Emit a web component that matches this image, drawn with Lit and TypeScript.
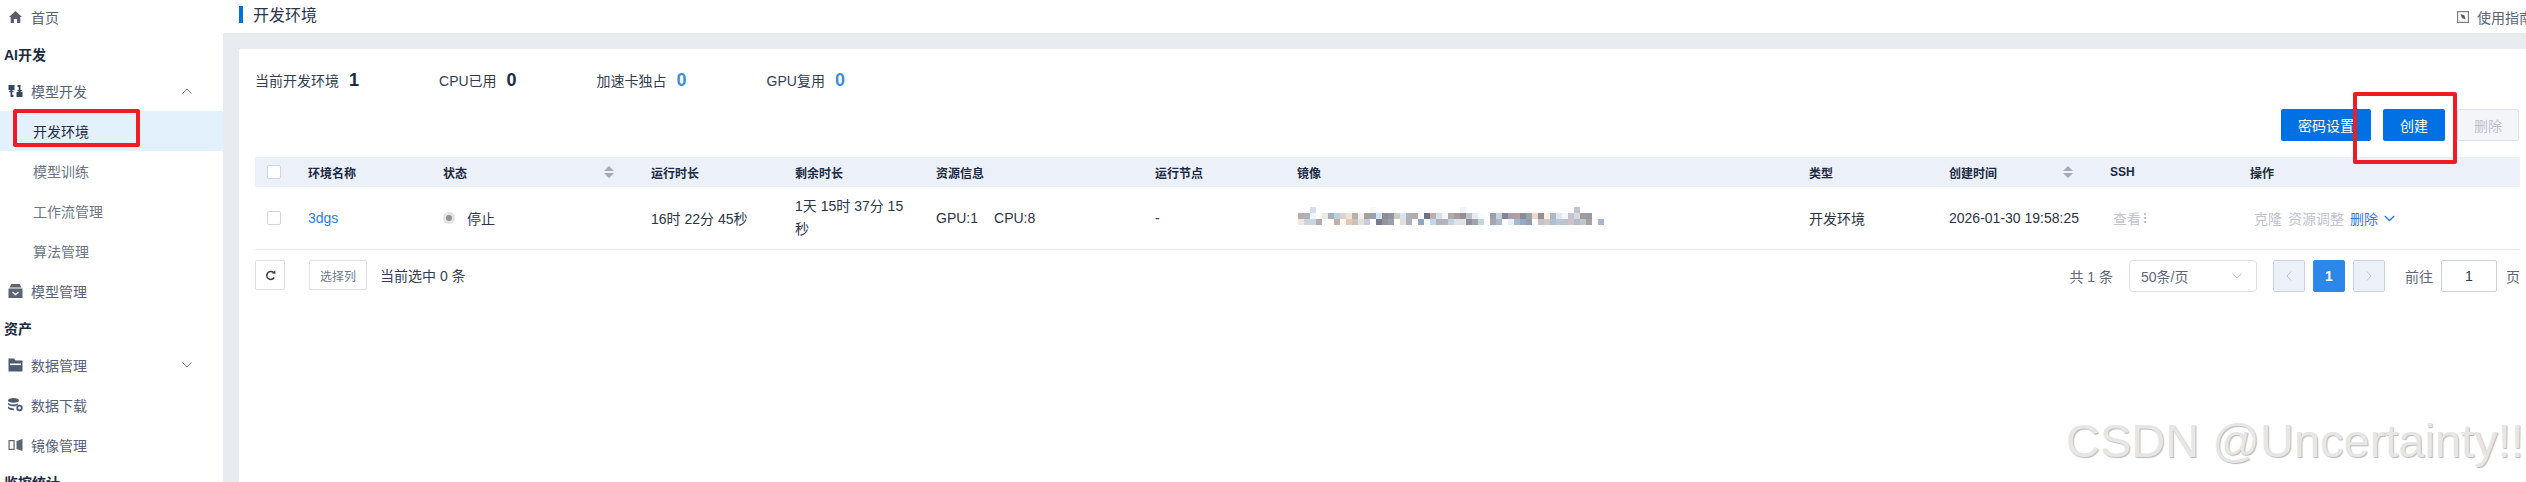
import { LitElement, html, css, svg } from "lit";
import { customElement } from "lit/decorators.js";

const R0: Record<number, string> = { 2: "#d6dfe9", 12: "#fbf8f3", 27: "#eef4fa", 46: "#c3c2c8" };
const R1 = ["#bdaba8","#a9b2bf","#ecf6fc","#fff","#ece8e4","#abafb9","#bcd0e4","#d9d4d1","#f3e4d3","#b8b2ae","#f2f0ef","#a89f9f","#96a2b0","#cfe4f1","#8f8e97","#8e96a1","#cfc9c2","#d0e6f7","#b2b0b6","#b5aab0","#fff","#6f7088","#c5aeaa","#d3dfea","#f5f5f5","#b5a8a8","#a79c9d","#968f95","#bdc2ca","#e4ebf2","#fafbfc","#fff","#96a0b3","#c6d3e0","#838499","#a5a0a9","#b3a09e","#8b8d95","#9aa5a9","#f0d9c4","#8f9098","#fdf0df","#aab8c6","#dce7ef","#f3f7fb","#c2c3cd","#d2dbe4","#a39a9d","#9a99a6","#fff","#fff"];
const R2 = ["#f3e6e1","#ced3da","#c7d6e3","#b2acaf","#fff","#fff","#bfb0ae","#fbf7f0","#e3c9b5","#cdc2ba","#e5e2dc","#c5cedc","#fff","#7b7b8e","#989398","#98a0ac","#fff","#e6ddd3","#aeb1bc","#fff","#8ea6c3","#fbfaf5","#bcdaf3","#b6b0b8","#b3b5bd","#c3d3e6","#dfe3e8","#e3e3e3","#8f909e","#a0a4ae","#c8d5de","#fff","#a7a6b0","#adbac6","#fff","#e8f0f7","#a8b8d0","#97a9c6","#95a0ae","#fff","#c9c2c6","#d2c9c8","#b2c0ce","#b7c8d8","#bfc2cc","#cfc3c5","#b7bbc6","#bdc7cc","#ab9f9f","#fff","#abb8cc"];

const icon = (w: number, h: number, vb: string, body: unknown) =>
  html`<svg class="ic" width=${w} height=${h} viewBox=${vb}>${body}</svg>`;

const icons: Record<string, unknown> = {
  home: icon(14, 14, "0 0 14 14", svg`<path fill="#585f6b" d="M7 1 L13.5 7 L11.8 7 L11.8 13 L8.6 13 L8.6 9 L5.4 9 L5.4 13 L2.2 13 L2.2 7 L.5 7 Z"/>`),
  dev: icon(14, 14, "0 0 14 14", svg`<g fill="#36465c"><rect x="0" y="1" width="6" height="5"/><rect x="8" y="8" width="6" height="5"/><path d="M9 1h3v5h2l-3 2.4L8.500 6h1.700V3H9z"/><path d="M5 13H2V8H0l3-2.400L5.500 8H3.800v3H5z"/></g>`),
  box: icon(14, 14, "0 0 14 14", svg`<path fill="#5a6472" d="M3 0h8l2 3.500H1zM0 4.500h14V14H0z"/><path fill="none" stroke="#fff" stroke-width="1.400" d="M4 8l3 2.500L10 8"/>`),
  folder: icon(14, 14, "0 0 14 14", svg`<path fill="#4c5b71" d="M0 .5h5.500L7 2.500h7V13.500H0z"/><rect x="1.500" y="5.500" width="11" height="1.600" fill="#fff"/>`),
  db: icon(15, 14, "0 0 15 14", svg`<g fill="#4c5b71"><ellipse cx="5.500" cy="2.400" rx="5.500" ry="2.400"/><path d="M0 4.400c1 1.500 3.500 2 5.500 2 1.500 0 3-.3 4.300-1v1.600C8.500 8 7 8.300 5.500 8.300 3.500 8.300 1 7.700 0 6.300zM0 8.300c1 1.500 3.500 2 5.500 2l.6 1.900c-2.600.2-5.200-.4-6.100-1.900z"/></g><circle cx="11.500" cy="10" r="2.300" fill="none" stroke="#4c5b71" stroke-width="1.800"/>`),
  mirror: icon(14, 12, "0 0 14 12", svg`<rect x=".6" y="1.600" width="5" height="8.800" fill="none" stroke="#5a6472" stroke-width="1.200"/><path fill="#5a6472" d="M8 2l6-2v12l-6-2z"/>`),
};

const chevron = (up: boolean) => html`<svg class="chev" width="10" height="6" viewBox="0 0 10 6"><path fill="none" stroke="#6b7585" stroke-width="1" d=${up ? "M.5 5.500L5 1l4.500 4.500" : "M.5.500L5 5l4.500-4.500"}/></svg>`;

const sortIcon = html`<svg class="sort" width="10" height="12" viewBox="0 0 10 12"><path fill="#a6aab4" d="M5 0l5 5H0zM0 7h10l-5 5z"/></svg>`;

@customElement("app-root")
export class AppRoot extends LitElement {
  static styles = css`
    :host { display: block; position: relative; width: 2526px; height: 482px; overflow: hidden; background: #e8ebf0;
      font-family: "Liberation Sans", "Noto Sans CJK SC", sans-serif; font-size: 14px; color: #2b3448; }
    * { box-sizing: border-box; }
    .page { display: flex; height: 482px; }
    .side { width: 223px; flex: none; background: #fff; height: 482px; overflow: hidden; }
    .nav { margin-top: -3px; display: flex; flex-direction: column; }
    .item { height: 40px; flex: none; display: flex; align-items: center; padding: 0 31px 0 8px; color: #55617a; }
    .item .ic { width: 15px; flex: none; margin-right: 8px; }
    .item .chev { margin-left: auto; margin-right: 0; }
    .sub { padding-left: 33px; color: #6b7586; }
    .sub.active { background: #e3f1fc; color: #1f2c44; }
    .title { height: 34px; flex: none; display: flex; align-items: center; padding-left: 4px; font-weight: 700; color: #1c2a44; }
    .main { flex: 1; min-width: 0; display: flex; flex-direction: column; }
    .top { height: 33px; flex: none; background: #fff; display: flex; align-items: center; padding: 0 0 0 16px; margin-bottom: 16px; position: relative; }
    .top .bar { width: 4px; height: 17px; background: #0071e3; margin-right: 10px; margin-top: -4px; }
    .top .name { font-size: 16px; color: #2b3448; margin-top: -6px; }
    .guide { margin-left: auto; display: flex; align-items: center; color: #5a6577; white-space: nowrap; width: 69px; overflow: hidden; flex: none; }
    .guide svg { flex: none; margin-right: 8px; }
    .card { flex: 1; background: #fff; margin-left: 16px; padding: 16px 6px 0 16px; min-height: 0; }
    .stats { display: flex; gap: 80px; height: 30px; align-items: center; color: #333d4f; }
    .stat { display: flex; align-items: center; gap: 10px; }
    .stat b { font-size: 18px; color: #1c2a44; }
    .stat b.blue { color: #3a8ee6; }
    .actions { display: flex; justify-content: flex-end; gap: 12px; margin-top: 14px; margin-right: 1px; height: 32px; }
    .btn { height: 32px; padding: 0 17px; display: flex; align-items: center; background: #0071e3; color: #fff; border-radius: 2px; }
    .btn.off { background: #f4f5f9; color: #bfc3cf; border: 1px solid #dfe2ea; padding: 0 16px; }
    .table { margin-top: 16px; }
    .row { display: grid; grid-template-columns: 53px 135px 208px 144px 141px 219px 142px 512px 140px 161px 140px 270px; }
    .head { height: 30px; background: #ebf0f9; font-size: 12px; font-weight: 700; color: #1c2a44; }
    .head > div { display: flex; align-items: center; }
    .body { height: 63px; border-bottom: 1px solid #e8ebf0; }
    .body > div { display: flex; align-items: center; }
    .pr { padding-right: 37px; }
    .sort { margin-left: auto; }
    .cb { width: 14px; height: 14px; border: 1px solid #cfd3e3; border-radius: 2px; background: #fff; margin-left: 12px; }
    .link { color: #2a7de1; }
    .dot { width: 12px; height: 12px; border-radius: 50%; background: #e3e3e3; margin-right: 12px; display: flex; align-items: center; justify-content: center; }
    .dot i { width: 6px; height: 6px; border-radius: 50%; background: #8f8f98; }
    .wrap { line-height: 23px; padding-right: 24px; }
    .res { gap: 16px; }
    .mosaic { display: grid; grid-template-columns: repeat(51, 6px); grid-auto-rows: 6px; margin-bottom: 4px; margin-left: 1px; }
    .ops { padding-left: 4px; gap: 6px; color: #bfc4d0; }
    .ops .del { color: #2a7de1; }
    .ops svg { margin-left: 0; }
    .ssh { padding-left: 3px; color: #bfc4d0; }
    .ssh svg { margin-left: 3px; }
    .foot { display: flex; align-items: flex-start; margin-top: 10px; }
    .refresh { width: 30px; height: 30px; border: 1px solid #dcdfe6; border-radius: 2px; display: flex; align-items: center; justify-content: center; margin-right: 24px; }
    .pick { width: 58px; height: 30px; border: 1px solid #dcdfe6; border-radius: 2px; display: flex; align-items: center; justify-content: center; font-size: 12px; color: #6f7a8c; margin-right: 13px; }
    .sel { height: 30px; display: flex; align-items: center; color: #333d4f; }
    .pager { margin-left: auto; display: flex; align-items: center; height: 32px; color: #5d6779; }
    .size { width: 128px; height: 32px; border: 1px solid #dcdfe6; border-radius: 4px; margin: 0 16px; padding: 0 14px 0 11px; display: flex; align-items: center; justify-content: space-between; }
    .pg { width: 32px; height: 32px; display: flex; align-items: center; justify-content: center; background: #ecf0f9; border: 1px solid #ccd0de; border-radius: 2px; margin-right: 8px; }
    .pg.on { background: #2b87e8; border-color: #2b87e8; color: #fff; font-weight: 700; }
    .goto { margin-left: 12px; margin-right: 8px; }
    .inp { width: 56px; height: 32px; border: 1px solid #ccd0e0; border-radius: 2px; display: flex; align-items: center; justify-content: center; color: #2d3a55; margin-right: 9px; }
    .red { position: absolute; border: 4px solid #ee1c25; border-radius: 2px; }
    .r1 { left: 13px; top: 109px; width: 127px; height: 38px; }
    .r2 { left: 2353px; top: 92px; width: 104px; height: 72px; }
    .mark { position: absolute; left: 2066px; top: 417px; font-size: 47px; line-height: 47px; color: #e6e6e6; text-shadow: 1px 1px 1px #b8b8b8; white-space: nowrap; }
  `;

  private mosaic() {
    const cells = [];
    for (let c = 0; c < 51; c++) cells.push(R0[c] ?? "#fff");
    for (let c = 0; c < 51; c++) cells.push(R1[c] ?? "#fff");
    for (let c = 0; c < 51; c++) cells.push(R2[c] ?? "#fff");
    return html`<div class="mosaic">${cells.map((col) => html`<span style="background:${col}"></span>`)}</div>`;
  }

  render() {
    const small = (d: string) => html`<svg width="6" height="10" viewBox="0 0 6 10"><path fill="none" stroke="#bcc3d0" d=${d}/></svg>`;
    return html`
      <div class="page">
        <aside class="side"><nav class="nav">
          <div class="item">${icons.home}首页</div>
          <div class="title">AI开发</div>
          <div class="item">${icons.dev}模型开发${chevron(true)}</div>
          <div class="item sub active">开发环境</div>
          <div class="item sub">模型训练</div>
          <div class="item sub">工作流管理</div>
          <div class="item sub">算法管理</div>
          <div class="item">${icons.box}模型管理</div>
          <div class="title">资产</div>
          <div class="item">${icons.folder}数据管理${chevron(false)}</div>
          <div class="item">${icons.db}数据下载</div>
          <div class="item">${icons.mirror}镜像管理</div>
          <div class="title">监控统计</div>
        </nav></aside>
        <main class="main">
          <header class="top">
            <span class="bar"></span><span class="name">开发环境</span>
            <span class="guide">
              <svg width="12" height="12" viewBox="0 0 12 12"><rect x=".6" y=".6" width="10.800" height="10.800" fill="none" stroke="#7b7f86" stroke-width="1.200"/><path fill="#55595f" d="M3.500 3l4 1.500 1 4-3.500-1.500z"/></svg>使用指南
            </span>
          </header>
          <section class="card">
            <div class="stats">
              <div class="stat">当前开发环境<b>1</b></div>
              <div class="stat">CPU已用<b>0</b></div>
              <div class="stat">加速卡独占<b class="blue">0</b></div>
              <div class="stat">GPU复用<b class="blue">0</b></div>
            </div>
            <div class="actions">
              <div class="btn">密码设置</div>
              <div class="btn">创建</div>
              <div class="btn off">删除</div>
            </div>
            <div class="table">
              <div class="row head">
                <div><span class="cb"></span></div>
                <div>环境名称</div>
                <div class="pr">状态${sortIcon}</div>
                <div>运行时长</div>
                <div>剩余时长</div>
                <div>资源信息</div>
                <div>运行节点</div>
                <div>镜像</div>
                <div>类型</div>
                <div class="pr">创建时间${sortIcon}</div>
                <div>SSH</div>
                <div>操作</div>
              </div>
              <div class="row body">
                <div><span class="cb"></span></div>
                <div class="link">3dgs</div>
                <div><span class="dot"><i></i></span>停止</div>
                <div>16时 22分 45秒</div>
                <div class="wrap">1天 15时 37分 15 秒</div>
                <div class="res"><span>GPU:1</span><span>CPU:8</span></div>
                <div>-</div>
                <div>${this.mosaic()}</div>
                <div>开发环境</div>
                <div>2026-01-30 19:58:25</div>
                <div class="ssh">查看<svg width="3" height="12" viewBox="0 0 3 12"><path fill="#bfc4d0" d="M0 1h2v2H0zM0 5h2v2H0zM0 9h2v2H0z"/></svg></div>
                <div class="ops"><span>克隆</span><span>资源调整</span><span class="del">删除</span>
                  <svg width="11" height="7" viewBox="0 0 11 7"><path fill="none" stroke="#2a7de1" stroke-width="1.400" d="M.8 1l4.700 4.500L10.200 1"/></svg></div>
              </div>
            </div>
            <div class="foot">
              <div class="refresh"><svg width="11" height="11" viewBox="0 0 11 11"><path fill="none" stroke="#333d4f" stroke-width="1.500" d="M9.200 7.500A4 4 0 1 1 8.500 2.500"/><path fill="#333d4f" d="M7 3.500L10.500 3.800 10.200 .3z"/></svg></div>
              <div class="pick">选择列</div>
              <div class="sel">当前选中 0 条</div>
              <div class="pager">
                <span>共 1 条</span>
                <div class="size"><span>50条/页</span><svg width="10" height="6" viewBox="0 0 10 6"><path fill="none" stroke="#c0c4cc" d="M.5.500L5 5l4.500-4.500"/></svg></div>
                <div class="pg">${small("M5 .5L1 5l4 4.500")}</div>
                <div class="pg on">1</div>
                <div class="pg">${small("M1 .5L5 5 1 9.500")}</div>
                <span class="goto">前往</span>
                <div class="inp">1</div>
                <span>页</span>
              </div>
            </div>
          </section>
        </main>
      </div>
      <div class="red r1"></div>
      <div class="red r2"></div>
      <div class="mark">CSDN @Uncertainty!!</div>
    `;
  }
}
